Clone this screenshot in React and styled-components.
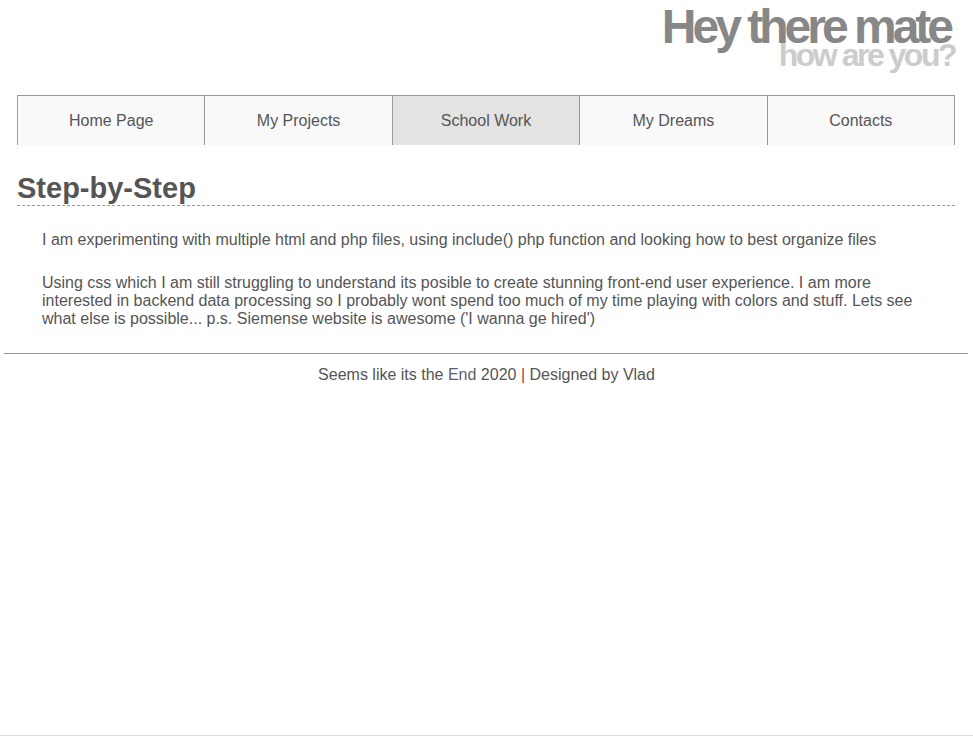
import React from "react";
import styled, { createGlobalStyle } from "styled-components";

const Global = createGlobalStyle`
  html, body { margin: 0; padding: 0; background: #fff; }
  body { font-family: "Liberation Sans", Arial, sans-serif; color: #555; }
`;

const Page = styled.div`
  display: flex;
  flex-direction: column;
`;

const Header = styled.header`
  display: flex;
  flex-direction: column;
  align-items: flex-end;
  padding: 3px 23px 0 0;
  height: 95px;
  box-sizing: border-box;
`;

const Title = styled.div`
  font-family: "Liberation Sans", Arial, sans-serif;
  font-weight: bold;
  font-size: ${(p) => p.$size}px;
  letter-spacing: ${(p) => p.$spacing}px;
  color: ${(p) => p.$color};
  line-height: 1;
  margin-top: ${(p) => p.$offset || 0}px;
  margin-right: ${(p) => p.$shift || 0}px;
`;

const Nav = styled.nav`
  display: grid;
  grid-template-columns: repeat(5, 1fr);
  margin: 0 18px 0 17px;
  border-top: 1px solid #999;
  border-left: 1px solid #999;
`;

const NavItem = styled.a`
  display: flex;
  align-items: center;
  justify-content: center;
  height: 49px;
  border-right: 1px solid #999;
  background: ${(p) => (p.$active ? "#e3e3e3" : "#f9f9f9")};
  color: #555;
  font-size: 16px;
  text-decoration: none;
`;

const Main = styled.main`
  padding: 0 18px 0 17px;
`;

const Heading = styled.h2`
  margin: 27px 0 0;
  font-size: 29px;
  font-weight: bold;
  color: #555;
  line-height: 33px;
  border-bottom: 1px dashed #999;
`;

const Para = styled.p`
  margin: ${(p) => p.$top}px 25px 0 25px;
  font-size: 16px;
  line-height: 18px;
  color: #555;
`;

const Rule = styled.hr`
  margin: 25px 5px 0 4px;
  border: none;
  border-top: 1px solid #999;
`;

const Footer = styled.footer`
  text-align: center;
  font-size: 16px;
  line-height: 18px;
  color: #555;
  margin-top: 12px;
`;

const Accent = styled.span`
  color: ${(p) => p.$color};
`;

const BottomLine = styled.div`
  position: fixed;
  left: 0;
  right: 0;
  bottom: 0;
  height: 1px;
  background: #ddd;
`;

const items = ["Home Page", "My Projects", "School Work", "My Dreams", "Contacts"];

export default function App() {
  return (
    <Page>
      <Global />
      <Header>
        <Title $size={48} $spacing={-4} $color="#878787">Hey there mate</Title>
        <Title $size={32} $spacing={-2.5} $color="#cccccc" $offset={-12} $shift={-5}>
          how are you?
        </Title>
      </Header>
      <Nav>
        {items.map((t) => (
          <NavItem key={t} href="#" $active={t === "School Work"}>
            {t}
          </NavItem>
        ))}
      </Nav>
      <Main>
        <Heading>Step-by-Step</Heading>
        <Para $top={25}>
          I am experimenting with multiple html and php files, using include() php function and looking how to best organize files
        </Para>
        <Para $top={25}>
          Using css which I am still struggling to understand its posible to create stunning front-end user experience. I am more interested in backend data processing so I probably wont spend too much of my time playing with colors and stuff. Lets see what else is possible... p.s. Siemense website is awesome ('I wanna ge hired')
        </Para>
      </Main>
      <Rule />
      <Footer>
        Seems like its the <Accent $color="#5d5d75">End</Accent> 2020{" "}
        <Accent $color="#a04040">|</Accent> Designed by Vlad
      </Footer>
      <BottomLine />
    </Page>
  );
}
